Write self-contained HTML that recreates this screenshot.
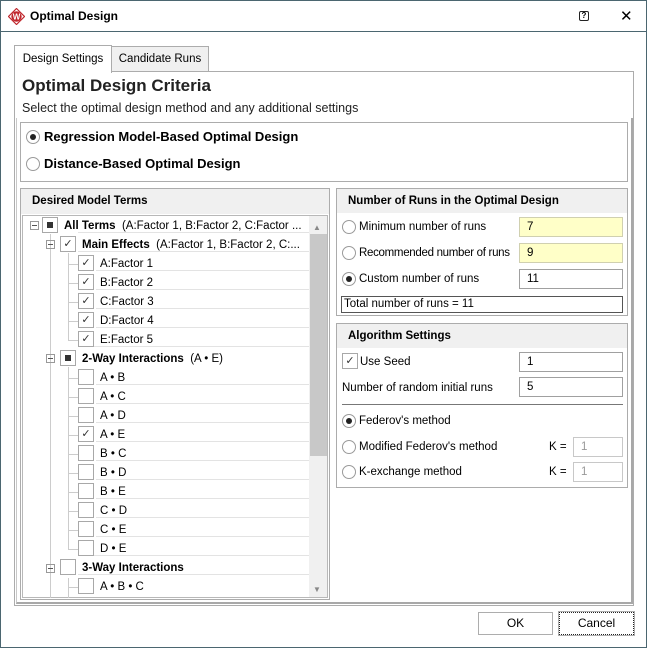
<!DOCTYPE html>
<html><head><style>
*{box-sizing:border-box;margin:0;padding:0}
body{width:647px;height:648px;background:#fff;font-family:"Liberation Sans",Tahoma,sans-serif;font-size:11.5px;line-height:14px;color:#000;position:relative;overflow:hidden}
.a{position:absolute;white-space:nowrap}
.n{line-height:normal}
.win{left:0;top:0;width:647px;height:648px;border:1px solid #4b6670}
.rb{width:14px;height:14px;border:1px solid #9a9a9a;border-radius:50%;background:#fff}
.rb.on::after{content:"";position:absolute;left:3px;top:3px;width:6px;height:6px;border-radius:50%;background:#222}
.cb{width:16px;height:16px;border:1px solid #a8a8a8;background:#fff;font-size:11px;line-height:14px;text-align:center;color:#333}
.cb.sq::after{content:"";position:absolute;left:4px;top:4px;width:6px;height:6px;background:#333}
.inp{height:20px;border:1px solid #a0a0a0;background:#fff;padding-left:7px;line-height:18px}
.y{background:#ffffc8;border-color:#d0d0b0}
.hd{background:#f0f0f0;font-weight:bold;padding-left:11px;line-height:25px}
.mn{width:9px;height:9px;border:1px solid #999}
.mn::after{content:"";position:absolute;left:1px;top:3px;width:5px;height:1px;background:#555}
.tl{background:#c8c8c8}
.btn{height:23px;border:1px solid #adadad;background:#fff;text-align:center;line-height:21px;font-size:12px}
</style></head><body>
<div class="a win"></div>
<div class="a" style="left:1px;top:31px;width:645px;height:1px;background:#4b6670"></div>
<svg class="a" style="left:8px;top:8px" width="17" height="17" viewBox="0 0 17 17"><path d="M8.5 0.5L16.5 8.5L8.5 16.5L0.5 8.5Z" fill="#fff" stroke="#c0272d" stroke-width="1.2"/><circle cx="8.5" cy="8.5" r="5.2" fill="#c0272d"/><text x="8.5" y="11.5" font-size="8" font-weight="bold" fill="#fff" text-anchor="middle" font-family="Liberation Sans">W</text></svg>
<div class="a n" style="left:30px;top:9px;font-weight:bold;font-size:12px">Optimal Design</div>
<div class="a" style="left:579px;top:11px;width:10px;height:10px;border:1px solid #222;border-radius:2px;font-size:8px;line-height:8px;text-align:center;font-weight:bold">?</div>
<div class="a n" style="left:620px;top:7px;font-size:15px">✕</div>

<div class="a" style="left:111px;top:46px;width:98px;height:26px;background:#f0f0f0;border:1px solid #acacac;border-bottom:none;text-align:center;line-height:25px">Candidate Runs</div>
<div class="a" style="left:14px;top:45px;width:98px;height:28px;background:#fff;border:1px solid #acacac;border-bottom:none;text-align:center;line-height:27px;z-index:2">Design Settings</div>
<div class="a" style="left:14px;top:71px;width:620px;height:535px;border:1px solid #acacac"></div>
<div class="a" style="left:16px;top:118px;width:617px;height:486px;border-left:1px solid #c8c8c8;border-right:2px solid #a8a8a8;border-bottom:2px solid #a8a8a8"></div>
<div class="a n" style="left:22px;top:76px;font-size:17px;font-weight:bold;color:#222">Optimal Design Criteria</div>
<div class="a n" style="left:22px;top:101px;font-size:12.5px;color:#222">Select the optimal design method and any additional settings</div>

<div class="a" style="left:20px;top:122px;width:608px;height:60px;border:1px solid #acacac"></div>
<div class="a rb on" style="left:26px;top:130px"></div>
<div class="a n" style="left:44px;top:129px;font-size:13px;font-weight:bold">Regression Model-Based Optimal Design</div>
<div class="a rb" style="left:26px;top:157px"></div>
<div class="a n" style="left:44px;top:156px;font-size:13px;font-weight:bold">Distance-Based Optimal Design</div>

<div class="a" style="left:20px;top:188px;width:310px;height:412px;border:1px solid #acacac"></div>
<div class="a hd" style="left:21px;top:189px;width:308px;height:25px">Desired Model Terms</div>
<div class="a" style="left:22px;top:215px;width:306px;height:383px;border:1px solid #b8b8b8;overflow:hidden">
 <div class="a" style="left:286px;top:0;width:18px;height:381px;background:#f0f0f0"></div>
 <div class="a tl" style="left:287px;top:18px;width:17px;height:222px"></div>
 <div class="a" style="left:290px;top:5px;font-size:8px;color:#888">▲</div>
 <div class="a" style="left:290px;top:367px;font-size:8px;color:#888">▼</div>
</div>

<div class="a" style="left:336px;top:188px;width:292px;height:128px;border:1px solid #acacac"></div>
<div class="a hd" style="left:337px;top:189px;width:290px;height:24px">Number of Runs in the Optimal Design</div>
<div class="a rb" style="left:342px;top:220px"></div><div class="a" style="left:359px;top:220px">Minimum number of runs</div>
<div class="a inp y" style="left:519px;top:217px;width:104px">7</div>
<div class="a rb" style="left:342px;top:246px"></div><div class="a" style="left:359px;top:246px;letter-spacing:-0.3px">Recommended number of runs</div>
<div class="a inp y" style="left:519px;top:243px;width:104px">9</div>
<div class="a rb on" style="left:342px;top:272px"></div><div class="a" style="left:359px;top:272px">Custom number of runs</div>
<div class="a inp" style="left:519px;top:269px;width:104px">11</div>
<div class="a" style="left:341px;top:296px;width:282px;height:17px;border:1px solid #555;padding-left:2px;line-height:15px">Total number of runs = 11</div>

<div class="a" style="left:336px;top:323px;width:292px;height:165px;border:1px solid #acacac"></div>
<div class="a hd" style="left:337px;top:324px;width:290px;height:24px">Algorithm Settings</div>
<div class="a cb" style="left:342px;top:353px">✓</div><div class="a" style="left:360px;top:355px">Use Seed</div>
<div class="a inp" style="left:519px;top:352px;width:104px">1</div>
<div class="a" style="left:342px;top:381px">Number of random initial runs</div>
<div class="a inp" style="left:519px;top:377px;width:104px">5</div>
<div class="a" style="left:342px;top:404px;width:281px;height:1px;background:#777"></div>
<div class="a rb on" style="left:342px;top:414px"></div><div class="a" style="left:359px;top:414px">Federov's method</div>
<div class="a rb" style="left:342px;top:440px"></div><div class="a" style="left:359px;top:440px">Modified Federov's method</div>
<div class="a" style="left:549px;top:440px">K =</div>
<div class="a inp" style="left:573px;top:437px;width:50px;color:#999;border-color:#c8c8c8">1</div>
<div class="a rb" style="left:342px;top:465px"></div><div class="a" style="left:359px;top:465px">K-exchange method</div>
<div class="a" style="left:549px;top:465px">K =</div>
<div class="a inp" style="left:573px;top:462px;width:50px;color:#999;border-color:#c8c8c8">1</div>

<div class="a btn" style="left:478px;top:612px;width:75px">OK</div>
<div class="a btn" style="left:559px;top:612px;width:75px;border:1px dotted #222;outline:1px solid #adadad">Cancel</div>

<div class="a mn" style="left:30px;top:221px"></div>
<div class="a cb sq" style="left:42px;top:217px"></div>
<div class="a" style="left:64px;top:219px"><b>All Terms</b>&nbsp; (A:Factor 1, B:Factor 2, C:Factor ...</div>
<div class="a" style="left:50px;top:234px;width:1px;height:364px;background:#ccc"></div>
<div class="a mn" style="left:46px;top:240px"></div>
<div class="a cb" style="left:60px;top:236px">✓</div>
<div class="a" style="left:82px;top:238px"><b>Main Effects</b>&nbsp; (A:Factor 1, B:Factor 2, C:...</div>
<div class="a" style="left:68px;top:253px;width:1px;height:88px;background:#ccc"></div>
<div class="a mn" style="left:46px;top:354px"></div>
<div class="a cb sq" style="left:60px;top:350px"></div>
<div class="a" style="left:82px;top:352px"><b>2-Way Interactions</b>&nbsp; (A • E)</div>
<div class="a" style="left:68px;top:367px;width:1px;height:183px;background:#ccc"></div>
<div class="a mn" style="left:46px;top:564px"></div>
<div class="a cb" style="left:60px;top:559px"></div>
<div class="a" style="left:82px;top:561px"><b>3-Way Interactions</b></div>
<div class="a" style="left:68px;top:578px;width:1px;height:20px;background:#ccc"></div>

<div class="a" style="left:78px;top:232px;width:231px;height:1px;background:#e3e3e3"></div>
<div class="a" style="left:78px;top:251px;width:231px;height:1px;background:#e3e3e3"></div>
<div class="a" style="left:78px;top:346px;width:231px;height:1px;background:#e3e3e3"></div>
<div class="a" style="left:78px;top:555px;width:231px;height:1px;background:#e3e3e3"></div>
<div class="a" style="left:78px;top:574px;width:231px;height:1px;background:#e3e3e3"></div>

<div class="a" style="left:68px;top:264px;width:10px;height:1px;background:#ccc"></div><div class="a cb" style="left:78px;top:255px">✓</div><div class="a" style="left:100px;top:257px">A:Factor 1</div><div class="a" style="left:96px;top:270px;width:213px;height:1px;background:#e3e3e3"></div>
<div class="a" style="left:68px;top:283px;width:10px;height:1px;background:#ccc"></div><div class="a cb" style="left:78px;top:274px">✓</div><div class="a" style="left:100px;top:276px">B:Factor 2</div><div class="a" style="left:96px;top:289px;width:213px;height:1px;background:#e3e3e3"></div>
<div class="a" style="left:68px;top:302px;width:10px;height:1px;background:#ccc"></div><div class="a cb" style="left:78px;top:293px">✓</div><div class="a" style="left:100px;top:295px">C:Factor 3</div><div class="a" style="left:96px;top:308px;width:213px;height:1px;background:#e3e3e3"></div>
<div class="a" style="left:68px;top:321px;width:10px;height:1px;background:#ccc"></div><div class="a cb" style="left:78px;top:312px">✓</div><div class="a" style="left:100px;top:314px">D:Factor 4</div><div class="a" style="left:96px;top:327px;width:213px;height:1px;background:#e3e3e3"></div>
<div class="a" style="left:68px;top:340px;width:10px;height:1px;background:#ccc"></div><div class="a cb" style="left:78px;top:331px">✓</div><div class="a" style="left:100px;top:333px">E:Factor 5</div>

<div class="a" style="left:68px;top:378px;width:10px;height:1px;background:#ccc"></div><div class="a cb" style="left:78px;top:369px"></div><div class="a" style="left:100px;top:371px">A • B</div><div class="a" style="left:96px;top:384px;width:213px;height:1px;background:#e3e3e3"></div>
<div class="a" style="left:68px;top:397px;width:10px;height:1px;background:#ccc"></div><div class="a cb" style="left:78px;top:388px"></div><div class="a" style="left:100px;top:390px">A • C</div><div class="a" style="left:96px;top:403px;width:213px;height:1px;background:#e3e3e3"></div>
<div class="a" style="left:68px;top:416px;width:10px;height:1px;background:#ccc"></div><div class="a cb" style="left:78px;top:407px"></div><div class="a" style="left:100px;top:409px">A • D</div><div class="a" style="left:96px;top:422px;width:213px;height:1px;background:#e3e3e3"></div>
<div class="a" style="left:68px;top:435px;width:10px;height:1px;background:#ccc"></div><div class="a cb" style="left:78px;top:426px">✓</div><div class="a" style="left:100px;top:428px">A • E</div><div class="a" style="left:96px;top:441px;width:213px;height:1px;background:#e3e3e3"></div>
<div class="a" style="left:68px;top:454px;width:10px;height:1px;background:#ccc"></div><div class="a cb" style="left:78px;top:445px"></div><div class="a" style="left:100px;top:447px">B • C</div><div class="a" style="left:96px;top:460px;width:213px;height:1px;background:#e3e3e3"></div>
<div class="a" style="left:68px;top:473px;width:10px;height:1px;background:#ccc"></div><div class="a cb" style="left:78px;top:464px"></div><div class="a" style="left:100px;top:466px">B • D</div><div class="a" style="left:96px;top:479px;width:213px;height:1px;background:#e3e3e3"></div>
<div class="a" style="left:68px;top:492px;width:10px;height:1px;background:#ccc"></div><div class="a cb" style="left:78px;top:483px"></div><div class="a" style="left:100px;top:485px">B • E</div><div class="a" style="left:96px;top:498px;width:213px;height:1px;background:#e3e3e3"></div>
<div class="a" style="left:68px;top:511px;width:10px;height:1px;background:#ccc"></div><div class="a cb" style="left:78px;top:502px"></div><div class="a" style="left:100px;top:504px">C • D</div><div class="a" style="left:96px;top:517px;width:213px;height:1px;background:#e3e3e3"></div>
<div class="a" style="left:68px;top:530px;width:10px;height:1px;background:#ccc"></div><div class="a cb" style="left:78px;top:521px"></div><div class="a" style="left:100px;top:523px">C • E</div><div class="a" style="left:96px;top:536px;width:213px;height:1px;background:#e3e3e3"></div>
<div class="a" style="left:68px;top:549px;width:10px;height:1px;background:#ccc"></div><div class="a cb" style="left:78px;top:540px"></div><div class="a" style="left:100px;top:542px">D • E</div>
<div class="a" style="left:68px;top:587px;width:10px;height:1px;background:#ccc"></div><div class="a cb" style="left:78px;top:578px"></div><div class="a" style="left:100px;top:580px">A • B • C</div>
</body></html>
